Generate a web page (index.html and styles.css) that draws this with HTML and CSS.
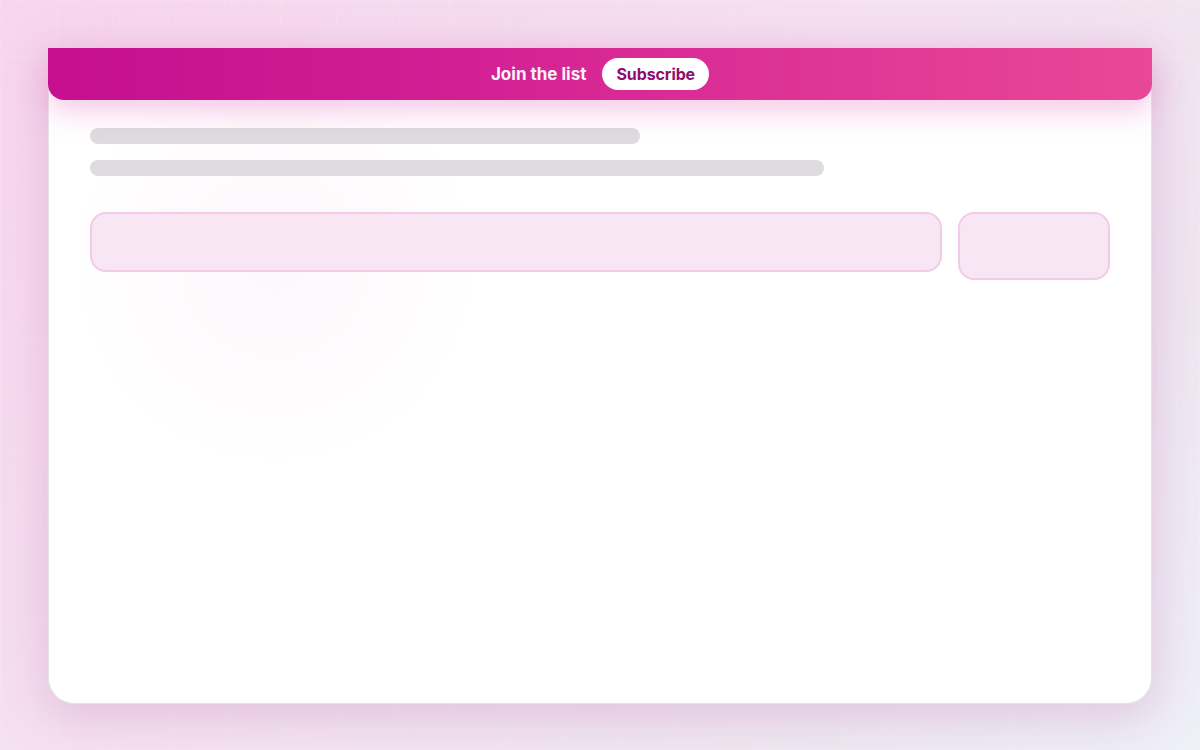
FILE: index.html
```html
<!DOCTYPE html>
<html lang="en">
<head>
    <meta charset="UTF-8">
    <meta name="viewport" content="width=device-width, initial-scale=1.0">
    <title>Join the list</title>
    <link rel="stylesheet" href="styles.css">
</head>
<body>
    <div class="page">
        <div class="card">
            <!-- Newsletter strip across the top of the card -->
            <div class="banner">
                <span class="banner-text">Join the list</span>
                <button class="banner-button" type="button">Subscribe</button>
            </div>

            <div class="card-body">
                <div class="skeleton skeleton-short"></div>
                <div class="skeleton skeleton-long"></div>

                <div class="form-row">
                    <div class="field"></div>
                    <div class="field-button"></div>
                </div>
            </div>
        </div>
    </div>
</body>
</html>
```

FILE: styles.css
```css
body {
    margin: 0;
    height: 750px;
    overflow: hidden;
    font-family: Inter, "Open Sans", sans-serif;
    background-color: #f3e4ef;
    background-image:
        linear-gradient(rgba(255, 255, 255, 0.1) 1px, transparent 1px),
        linear-gradient(90deg, rgba(255, 255, 255, 0.1) 1px, transparent 1px),
        linear-gradient(135deg, #f8d6ee 0%, #f5e2f1 45%, #efe7f1 75%, #eef0f8 100%);
    background-size: 56px 56px, 56px 56px, 100% 100%;
}

.page {
    padding: 48px 48px 0;
}

.card {
    height: 656px;
    box-sizing: border-box;
    background-color: #fff;
    background-image: radial-gradient(circle at 225px 215px, rgba(248, 226, 242, 0.26) 0, rgba(248, 226, 242, 0.13) 130px, rgba(255, 255, 255, 0) 200px);
    border: 1px solid #e6e3ea;
    border-top: none;
    border-radius: 0 0 26px 26px;
    box-shadow: 0 14px 40px rgba(200, 160, 195, 0.35), 0 0 60px rgba(236, 160, 210, 0.25);
}

.banner {
    height: 52px;
    margin: 0 -1px;
    display: flex;
    justify-content: center;
    align-items: center;
    gap: 16px;
    background: linear-gradient(90deg, #c50f8f 0%, #d11e93 35%, #df3596 70%, #e94897 100%);
    border-radius: 0 0 16px 16px;
    box-shadow: 0 12px 28px rgba(232, 110, 190, 0.35);
    position: relative;
}

.banner-text {
    color: #fff;
    font-size: 17px;
    font-weight: 700;
    letter-spacing: 0;
    opacity: 0.95;
}

.banner-button {
    height: 32px;
    padding: 0 14px;
    border: none;
    border-radius: 16px;
    background-color: #fff;
    color: #8f0d6f;
    font-family: inherit;
    font-size: 16px;
    font-weight: 700;
    letter-spacing: -0.1px;
    cursor: pointer;
}

.card-body {
    padding: 28px 41px 0;
}

.skeleton {
    height: 16px;
    border-radius: 8px;
    background-color: #dedcdf;
}

.skeleton-short {
    width: 550px;
}

.skeleton-long {
    width: 734px;
    margin-top: 16px;
}

.form-row {
    display: flex;
    align-items: flex-start;
    gap: 16px;
    margin-top: 36px;
}

.field,
.field-button {
    box-sizing: border-box;
    background-color: #f8e6f4;
    border: 2px solid #f1cbe7;
    border-radius: 16px;
}

.field {
    flex: 1;
    height: 60px;
}

.field-button {
    width: 152px;
    height: 68px;
}
```
